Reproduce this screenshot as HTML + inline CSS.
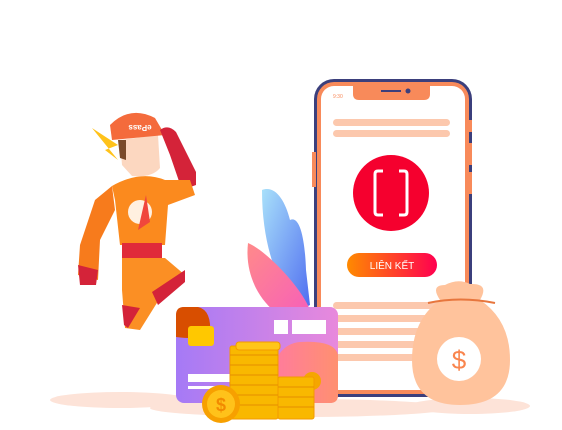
<!DOCTYPE html>
<html><head><meta charset="utf-8"><style>
html,body{margin:0;padding:0;background:#fff;width:562px;height:430px;overflow:hidden}
svg{display:block}
</style></head><body>
<svg width="562" height="430" viewBox="0 0 562 430" xmlns="http://www.w3.org/2000/svg">
<defs>
<linearGradient id="btn" x1="0" x2="1"><stop offset="0" stop-color="#ff8a00"/><stop offset="1" stop-color="#ff0050"/></linearGradient>
<linearGradient id="card" x1="0" x2="1"><stop offset="0" stop-color="#a57af6"/><stop offset="1" stop-color="#e889dc"/></linearGradient>
<linearGradient id="leafb" x1="0" y1="0" x2="1" y2="1"><stop offset="0" stop-color="#a8e0fa"/><stop offset="1" stop-color="#4f6cf0"/></linearGradient>
<linearGradient id="leafp" x1="0" y1="0" x2="1" y2="1"><stop offset="0" stop-color="#ff8a8a"/><stop offset="1" stop-color="#f760b8"/></linearGradient>
<linearGradient id="blob" x1="0" x2="1"><stop offset="0" stop-color="#ff7aa0"/><stop offset="1" stop-color="#ff9070"/></linearGradient>
</defs>
<ellipse cx="120" cy="400" rx="70" ry="8" fill="#fde3d8"/>
<ellipse cx="300" cy="408" rx="150" ry="9" fill="#fde3d8"/>
<ellipse cx="470" cy="406" rx="60" ry="8" fill="#fde3d8"/>
<path d="M262 190 C275 185 285 200 290 220 C300 215 305 240 306 270 L310 305 L300 310 C280 290 262 250 262 190Z" fill="url(#leafb)"/>
<path d="M248 243 C265 250 300 285 310 310 L275 312 C255 295 245 270 248 243Z" fill="url(#leafp)"/>
<rect x="314" y="79" width="158" height="318" rx="20" fill="#3b3f7c"/>
<rect x="317" y="82" width="152" height="312" rx="17" fill="#f88a5a"/>
<rect x="321" y="86" width="144" height="304" rx="13" fill="#fff"/>
<path d="M353 86 H430 V94 Q430 100 424 100 H359 Q353 100 353 94Z" fill="#f88a5a"/>
<rect x="381" y="90" width="20" height="2" fill="#3b3f7c"/>
<circle cx="408" cy="91" r="2.5" fill="#3b3f7c"/>
<rect x="468" y="120" width="4" height="12" fill="#f88a5a"/>
<rect x="468" y="143" width="4" height="22" fill="#f88a5a"/>
<rect x="468" y="172" width="4" height="22" fill="#f88a5a"/>
<rect x="312" y="152" width="4" height="35" fill="#f88a5a"/>
<text x="333" y="98" font-family="Liberation Sans" font-size="5" fill="#f88a5a">9:30</text>
<rect x="333" y="119" width="117" height="7" rx="3.5" fill="#fcc8ad"/>
<rect x="333" y="130" width="117" height="7" rx="3.5" fill="#fcc8ad"/>
<circle cx="391" cy="193" r="38" fill="#f5002e"/>
<path d="M383 171 h-5 q-3 0 -3 3 v38 q0 3 3 3 h5 M399 171 h5 q3 0 3 3 v38 q0 3 -3 3 h-5" stroke="#fff" stroke-width="3" fill="none"/>
<rect x="347" y="253" width="90" height="24" rx="12" fill="url(#btn)"/>
<text x="392" y="269" text-anchor="middle" font-family="Liberation Sans" font-size="10" fill="#fff">LIÊN KẾT</text>
<rect x="333" y="302" width="125" height="7" rx="3.5" fill="#fcc8ad"/>
<rect x="333" y="315" width="125" height="7" rx="3.5" fill="#fcc8ad"/>
<rect x="333" y="328" width="125" height="7" rx="3.5" fill="#fcc8ad"/>
<rect x="333" y="341" width="125" height="7" rx="3.5" fill="#fcc8ad"/>
<rect x="333" y="354" width="125" height="7" rx="3.5" fill="#fcc8ad"/>
<rect x="176" y="307" width="162" height="96" rx="8" fill="url(#card)"/>
<path d="M184 307 H198 Q212 310 210 335 Q200 340 176 337 V315 Q176 307 184 307Z" fill="#d84e00"/>
<path d="M270 403 Q268 345 300 342 Q335 340 338 355 V395 Q338 403 330 403Z" fill="url(#blob)"/>
<rect x="188" y="326" width="26" height="20" rx="3" fill="#ffc800"/>
<rect x="274" y="320" width="14" height="14" fill="#fff"/>
<rect x="292" y="320" width="34" height="14" fill="#fff"/>
<rect x="188" y="374" width="45" height="8" fill="#fff"/>
<rect x="188" y="386" width="30" height="3" fill="#fff"/>
<circle cx="312" cy="381" r="9" fill="#f5a600"/>
<g fill="#f9b800" stroke="#f39a00" stroke-width="1">
<rect x="278" y="377" width="36" height="42" rx="2"/>
<rect x="230" y="346" width="48" height="73" rx="2"/>
<rect x="236" y="342" width="44" height="8" rx="3" fill="#ffc61a"/>
</g>
<g stroke="#e58e00" stroke-width="1">
<line x1="230" y1="355" x2="278" y2="355"/><line x1="230" y1="365" x2="278" y2="365"/><line x1="230" y1="375" x2="278" y2="375"/><line x1="230" y1="385" x2="278" y2="385"/><line x1="230" y1="395" x2="278" y2="395"/><line x1="230" y1="405" x2="278" y2="405"/>
<line x1="278" y1="387" x2="314" y2="387"/><line x1="278" y1="397" x2="314" y2="397"/><line x1="278" y1="407" x2="314" y2="407"/>
</g>
<circle cx="221" cy="404" r="19" fill="#f7a000"/>
<circle cx="221" cy="404" r="14" fill="#ffc21a"/>
<text x="221" y="411" text-anchor="middle" font-family="Liberation Sans" font-size="18" font-weight="bold" fill="#f28a00">$</text>
<path d="M440 300 Q430 285 445 285 Q458 278 470 284 Q490 283 480 300 Q510 320 510 360 Q510 405 460 405 Q412 405 412 360 Q412 320 440 300Z" fill="#ffc39c"/>
<path d="M428 303 Q460 296 495 303" stroke="#e7763d" stroke-width="2" fill="none"/>
<circle cx="459" cy="359" r="22" fill="#fff"/>
<text x="459" y="369" text-anchor="middle" font-family="Liberation Sans" font-size="26" fill="#f9854e">$</text>
<!-- character -->
<path d="M92 128 L118 145 L105 150 L118 160 Z" fill="#ffc21a"/>
<path d="M120 140 L158 135 L160 168 Q152 178 132 176 L122 165Z" fill="#fcd7c0"/>
<path d="M118 140 L126 140 L126 160 L120 158Z" fill="#7a4a2a"/>
<path d="M110 125 Q130 105 155 118 L165 135 L112 140Z" fill="#f46b3c"/>
<text x="140" y="131" text-anchor="middle" font-family="Liberation Sans" font-size="8" font-weight="bold" fill="#fff" transform="rotate(180 140 128)">ePass</text>
<path d="M160 130 Q168 124 176 132 L196 172 L196 185 L182 190 L170 155Z" fill="#d42339"/>
<path d="M112 186 Q140 170 165 180 L190 180 L195 195 L168 205 L165 245 L120 245 L115 200Z" fill="#fb8a1e"/>
<path d="M112 186 L95 200 L80 245 L78 275 L98 280 L100 240 L115 210Z" fill="#f77b1c"/>
<path d="M78 265 L98 270 L96 285 L80 285Z" fill="#d42339"/>
<path d="M122 243 H162 L162 258 H122Z" fill="#e02b3a"/>
<path d="M122 258 H165 L185 275 L160 298 L140 330 L125 328 L122 290Z" fill="#fb8f24"/>
<path d="M152 292 L185 270 L185 282 L158 305Z" fill="#d42339"/>
<path d="M122 305 L140 308 L128 328 L124 325Z" fill="#d42339"/>
<circle cx="140" cy="212" r="12" fill="#fff0e0"/>
<path d="M146 195 L150 222 L138 230Z" fill="#f0463c"/>
</svg>
</body></html>
